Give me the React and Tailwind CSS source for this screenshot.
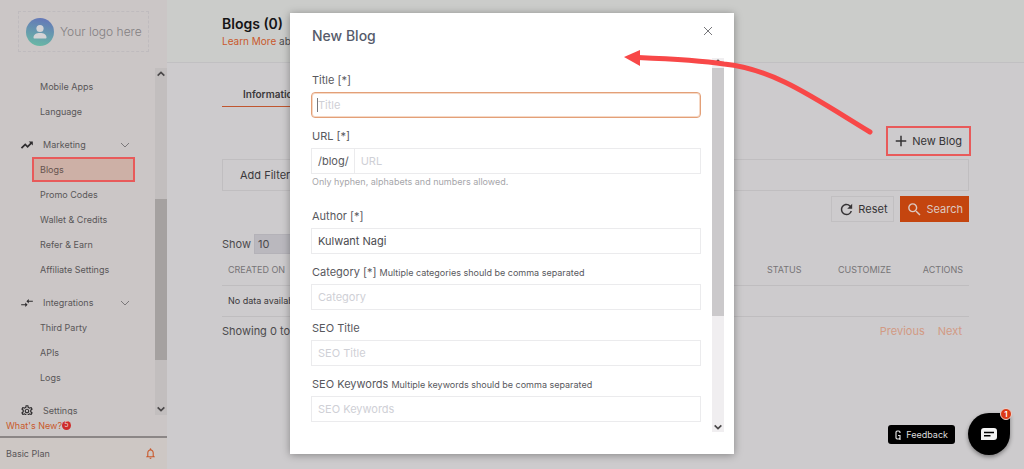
import { useState } from 'react';
import {
  MdAdd,
  MdCompareArrows,
  MdNotificationsNone,
  MdOutlineSettings,
  MdRefresh,
  MdSearch,
} from 'react-icons/md';

function TrendIcon({ className }) {
  return (
    <svg className={className} viewBox="0 0 24 24" fill="none" stroke="currentColor" strokeWidth="3">
      <path d="M2.500 17.500l6.500-6.500 4 4 7-7" />
      <path d="M15 6h7v7z" fill="currentColor" stroke="none" />
    </svg>
  );
}

const MENU = [
  { items: ['Mobile Apps', 'Language'] },
  {
    title: 'Marketing',
    Icon: TrendIcon,
    items: ['Blogs', 'Promo Codes', 'Wallet & Credits', 'Refer & Earn', 'Affiliate Settings'],
  },
  { title: 'Integrations', Icon: MdCompareArrows, items: ['Third Party', 'APIs', 'Logs'] },
  { title: 'Settings', Icon: MdOutlineSettings, items: [] },
];

function Chevron({ className, up = false, strokeWidth = 1.5 }) {
  return (
    <svg className={className} viewBox="0 0 12 8" fill="none" stroke="currentColor" strokeWidth={strokeWidth}>
      <path d={up ? 'M2 6l4-4 4 4' : 'M2 2l4 4 4-4'} />
    </svg>
  );
}

function Logo() {
  return (
    <a href="#home" className="mx-[18px] mt-[11px] flex h-[41px] shrink-0 items-center gap-[6px] border border-dashed border-[#bfbbbe] pl-[7px]">
      <svg className="size-7 shrink-0" viewBox="0 0 28 28">
        <defs>
          <linearGradient id="avatar" x1="0.6" y1="0" x2="0.4" y2="1">
            <stop offset="0" stopColor="#6477b8" />
            <stop offset="1" stopColor="#69b8a5" />
          </linearGradient>
        </defs>
        <circle cx="14" cy="14" r="14" fill="url(#avatar)" />
        <circle cx="14" cy="10.5" r="3.6" fill="#d3d3d6" />
        <path d="M7.500 19.500c0-3.200 3-4.500 6.500-4.500s6.500 1.300 6.500 4.500c0 .6-.4 1-1 1h-11c-.6 0-1-.4-1-1z" fill="#d3d3d6" />
      </svg>
      <span className="whitespace-nowrap text-[12px] font-light text-[#838082]">Your logo here</span>
    </a>
  );
}

function MenuGroup({ title, Icon, items }) {
  return (
    <div>
      {title && (
        <button type="button" className="mt-2 flex h-[25px] w-full items-center pl-5 pr-[24px] text-[9px] text-[#595658]">
          <Icon className="mr-[9px] size-[14px] text-[#2e2c2e]" />
          {title}
          {items.length > 0 && <Chevron className="ml-auto h-2 w-3 text-[#7b787a]" strokeWidth={1} />}
        </button>
      )}
      {items.map((item) => (
        <a
          key={item}
          href="#menu"
          className={
            item === 'Blogs'
              ? 'ml-[32px] mr-[20px] flex h-[25px] items-center border-2 border-[#e85a5a] bg-[#cdb0a6] pl-1.5 text-[9px] text-[#66544f]'
              : 'ml-[32px] mr-[20px] flex h-[25px] items-center pl-2 text-[9px] text-[#595658]'
          }
        >
          {item}
        </a>
      ))}
    </div>
  );
}

function Sidebar() {
  return (
    <aside className="flex w-[167px] shrink-0 flex-col bg-[#cbc6c6]">
      <Logo />
      <div className="mt-4 flex min-h-0 flex-1">
        <nav className="min-w-0 flex-1 overflow-hidden pt-[6px]">
          {MENU.map((group, i) => (
            <MenuGroup key={i} {...group} />
          ))}
        </nav>
        <div className="flex w-3 flex-col items-center bg-[#c2bebe] py-0.5 text-[#4a4849]">
          <Chevron up className="h-2 w-2.5" strokeWidth={2} />
          <div className="mt-[121px] h-[161px] w-full bg-[#a5a1a0]" />
          <Chevron className="mt-auto h-2 w-2.5" strokeWidth={2} />
        </div>
      </div>
      <div className="flex h-[23px] shrink-0 items-center border-b-2 border-[#8b8686] pl-1.5 text-[9px] text-[#c9592c]">
        <a href="#news">What's New?</a>
        <span className="flex size-[9px] items-center justify-center rounded-full bg-[#cf2a2a] text-[7px] text-[#e8d4d4]">5</span>
      </div>
      <div className="flex h-[31px] shrink-0 items-center justify-between bg-[#cdc7c4] pl-1.5 pr-2.5 text-[9px] text-[#595658]">
        Basic Plan
        <button type="button" aria-label="Notifications" className="text-[#c9592c]">
          <MdNotificationsNone className="size-[13px]" />
        </button>
      </div>
    </aside>
  );
}

function BlogList() {
  return (
    <main className="min-w-0 flex-1 bg-[#cdcbcd] text-[#4c4a4c]">
      <header className="flex h-[63px] flex-col border-b border-[#c1c0c2] bg-[#cbccca] px-[55px] pt-[14px]">
        <h1 className="text-[14px] font-semibold leading-5 text-[#151415]">Blogs (0)</h1>
        <p className="text-[10px] leading-[15px]">
          <a href="#learn" className="text-[#c9592c]">Learn More</a> about
        </p>
      </header>
      <div className="px-[55px]">
        <div className="flex h-11 items-end">
          <button type="button" className="h-6 border-b border-[#c0562f] px-[21px] text-[10px] font-semibold text-[#3b393b]">
            Information
          </button>
        </div>
        <div className="mt-[19px] flex justify-end">
          <button type="button" className="-mr-0.5 flex h-[30px] items-center gap-0.5 border-2 border-[#e85a5a] pl-1 pr-[7px] text-[11px] text-[#353335]">
            <MdAdd className="size-[18px]" />
            New Blog
          </button>
        </div>
        <div className="mt-[3px] flex h-8 items-center border border-[#c0bec0] px-[17px] text-[11px] text-[#3b393b]">
          Add Filters
        </div>
        <div className="mt-[5px] flex justify-end gap-1.5 text-[11px]">
          <button type="button" className="flex h-[26px] items-center gap-[3px] border border-[#c1bfc1] px-1.5 text-[#353335]">
            <MdRefresh className="size-[17px]" />
            Reset
          </button>
          <button type="button" className="flex h-[26px] items-center gap-[3px] bg-[#c4450f] px-1.5 text-[#dcc9c2]">
            <MdSearch className="size-[17px]" />
            Search
          </button>
        </div>
        <label className="mt-[12px] flex h-5 items-center gap-[3px] text-[11px]">
          Show
          <select className="h-5 w-16 appearance-none border border-[#b4b2b8] bg-[#bab8be] px-[3px] text-[11px]">
            <option>10</option>
          </select>
        </label>
        <table className="mt-px w-full text-[9px]">
          <thead>
            <tr className="h-[30px] border-b border-[#bfbdbf] text-left text-[#767476]">
              <th className="pl-1.5 font-normal">CREATED ON</th>
              <th className="w-[71px] font-normal">STATUS</th>
              <th className="w-[71px] font-normal">CUSTOMIZE</th>
              <th className="w-[60px] pr-1.5 text-right font-normal">ACTIONS</th>
            </tr>
          </thead>
          <tbody>
            <tr className="h-[31px] border-b border-[#bfbdbf] text-[#3b393b]">
              <td colSpan={4} className="pl-1.5">No data available</td>
            </tr>
          </tbody>
        </table>
        <div className="flex h-[30px] items-center justify-between pr-[7px] text-[11px]">
          <span>Showing 0 to 0</span>
          <div className="flex gap-[13px] text-[#d29a84]">
            <button type="button">Previous</button>
            <button type="button">Next</button>
          </div>
        </div>
      </div>
    </main>
  );
}

const INPUT =
  'block h-[26px] w-full min-w-0 border border-[#ebebed] bg-white px-1.5 text-[11px] text-[#4b4b50] placeholder-[#cfd0d6] outline-none focus:border-[#e0a57f]';

function Field({ id, label, note, value }) {
  return (
    <div>
      <label htmlFor={id} className="mb-1 flex h-4 items-baseline gap-[3px] pl-px text-[11px] leading-4">
        {label}
        {note && <span className="text-[9px]">{note}</span>}
      </label>
      <input id={id} type="text" placeholder={label.replace(' [*]', '')} defaultValue={value} className={INPUT} />
    </div>
  );
}

function NewBlogDialog({ onClose }) {
  return (
    <div role="dialog" aria-label="New Blog" className="flex w-[444px] flex-col bg-white pb-[22px] text-[#58585d] shadow-[0_1px_8px_rgba(0,0,0,0.35)]">
      <div className="flex h-[45px] shrink-0 items-center justify-between pl-[22px] pr-5">
        <h2 className="text-[14px] font-medium text-[#565b6b]">New Blog</h2>
        <button type="button" aria-label="Close" onClick={onClose} className="mb-2.5">
          <svg className="size-3" viewBox="0 0 12 12" stroke="#77777b">
            <path d="M2 2l8 8M10 2l-8 8" />
          </svg>
        </button>
      </div>
      <div className="flex min-h-0 flex-1 pr-2.5">
        <form className="flex flex-1 flex-col gap-2.5 overflow-hidden pl-[21px] pr-[11px] pt-[14px]">
          <div>
            <label htmlFor="title" className="mb-1 block pl-px text-[11px] leading-4">Title [*]</label>
            <div className="flex h-[26px] items-center rounded-sm border border-[#e3a078] px-[5px] ring-1 ring-inset ring-[#f6d9c6]">
              <span className="h-3.5 w-px bg-[#77777b]" />
              <input
                id="title"
                type="text"
                placeholder="Title"
                className="w-full min-w-0 text-[11px] placeholder-[#cfd0d6] outline-none"
              />
            </div>
          </div>
          <div>
            <label htmlFor="url" className="mb-1 block pl-px text-[11px] leading-4">URL [*]</label>
            <div className="flex">
              <span className="flex h-[26px] items-center border border-r-0 border-[#ebebed] pl-1.5 pr-[5px] text-[11px]">/blog/</span>
              <input id="url" type="text" placeholder="URL" className={INPUT} />
            </div>
            <p className="mb-2 pl-px text-[9px] leading-4 text-[#a6a6aa]">Only hyphen, alphabets and numbers allowed.</p>
          </div>
          <Field id="author" label="Author [*]" value="Kulwant Nagi" />
          <Field id="category" label="Category [*]" note="Multiple categories should be comma separated" />
          <Field id="seo-title" label="SEO Title" />
          <Field id="seo-keywords" label="SEO Keywords" note="Multiple keywords should be comma separated" />
        </form>
        <div className="flex w-3 flex-col items-center bg-[#f0eef0] pb-px text-[#4a4849]">
          <Chevron up className="mb-0.5 h-2 w-2.5 shrink-0" strokeWidth={2} />
          <div className="h-[248px] w-full bg-[#cbc9cb]" />
          <Chevron className="mt-auto h-2 w-2.5" strokeWidth={2} />
        </div>
      </div>
    </div>
  );
}

export default function App() {
  const [open, setOpen] = useState(true);

  return (
    <div className="relative flex h-screen overflow-hidden font-['Inter',sans-serif]">
      <Sidebar />
      <BlogList />

      {open && (
        <div className="absolute inset-0 flex justify-center pb-[15px] pt-[13px]">
          <NewBlogDialog onClose={() => setOpen(false)} />
          {/* Callout arrow from the New Blog button to the dialog */}
          <svg className="pointer-events-none absolute left-1/2 top-12 ml-28 h-[90px] w-[256px]" viewBox="0 0 256 90">
            <path d="M14 9.500C50 11 80 13 100 16C150 21 190 50 246 84" fill="none" stroke="#f84848" strokeWidth="5" strokeLinecap="round" />
            <path d="M0 9L16 2v16z" fill="#f84848" />
          </svg>
        </div>
      )}

      {/* Floating widgets */}
      <div className="absolute bottom-[14px] right-[14px] flex items-center gap-[13px]">
        <button type="button" className="mt-[1px] flex h-[19px] items-center gap-[5px] rounded-[3px] bg-black px-[7px] text-[9px] text-[#dddddd]">
          <svg className="h-2.5 w-1.5" viewBox="0 0 6 10" fill="none" stroke="currentColor" strokeWidth="1.200">
            <path d="M5 3V2L4 1H2L1 2v6l1 1h2l1-1V5.500H3M5 8v2" />
          </svg>
          Feedback
        </button>
        <button type="button" aria-label="Open chat" className="relative flex size-[42px] items-center justify-center rounded-full rounded-tr-none bg-black shadow-[0_2px_4px_rgba(0,0,0,0.4)]">
          <svg className="h-3 w-4" viewBox="0 0 16 12">
            <path d="M3 0h10a3 3 0 013 3v6a3 3 0 01-3 3H0V3a3 3 0 013-3z" fill="#f4f4f4" />
            <path d="M3 4.500h10M3 7.800h6.500" stroke="#000000" strokeWidth="1.400" />
          </svg>
          <span className="absolute -right-[2px] -top-[5px] flex size-3 items-center justify-center rounded-full border border-[#e9d5cf] bg-[#dc3a16] text-[8px] font-semibold text-white">
            1
          </span>
        </button>
      </div>
    </div>
  );
}
